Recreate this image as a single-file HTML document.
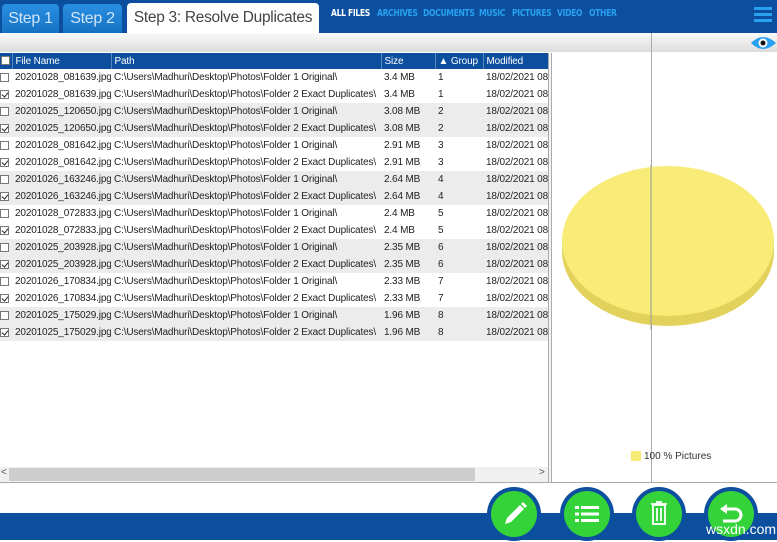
<!DOCTYPE html>
<html><head><meta charset="utf-8"><style>
*{margin:0;padding:0;box-sizing:border-box}
body{width:777px;height:540px;overflow:hidden;background:#fff;font-family:"Liberation Sans",sans-serif;position:relative}
.abs{position:absolute}
.top{left:0;top:0;width:777px;height:33px;background:#0b4f9e}
.tab{top:4px;height:29px;border-radius:4px 4px 0 0;background:linear-gradient(#2a8ee0,#1673c4);color:#cfe6fa;font-size:16px;line-height:29px;text-align:center;white-space:nowrap;letter-spacing:-0.3px}
.cat{top:8px;font-size:10px;font-weight:bold;color:#2aa0f0;font-family:"DejaVu Sans Condensed","Liberation Sans Narrow",sans-serif;letter-spacing:-0.4px;transform:scaleX(.85);transform-origin:left;white-space:nowrap}
.gbar{left:0;top:33px;width:777px;height:19px;background:linear-gradient(#fafafa,#dcdcdc)}
table{position:absolute;left:0;top:53px;border-collapse:collapse;font-size:10px;width:548px;table-layout:fixed}
td,th{height:17px;white-space:nowrap;overflow:hidden;padding-left:3px;font-weight:normal;text-align:left;color:#222;font-family:"Liberation Sans",sans-serif;letter-spacing:-0.15px}
th{background:#0b4f9e;color:#fff;height:16px;border-right:1px solid #5a86c0}
tr.g td{background:#ececec}
.cb{display:inline-block;width:9px;height:9px;border:1px solid #777;background:#fff;vertical-align:middle;position:relative}
.cb.c::after{content:"";position:absolute;left:2px;top:0;width:3px;height:5px;border:solid #222;border-width:0 1.5px 1.5px 0;transform:rotate(40deg)}
td.c0,th.c0{padding-left:0}
.btn{width:54px;height:54px;border-radius:50%;background:#0b4f9e;top:487px}
.btn div{position:absolute;left:4px;top:4px;width:46px;height:46px;border-radius:50%;background:#34d33a}
</style></head><body>
<div class="abs top"></div>
<div class="abs tab" style="left:2px;width:57px">Step 1</div>
<div class="abs tab" style="left:63px;width:59px">Step 2</div>
<div class="abs tab" style="left:127px;width:192px;top:3px;height:30px;background:#fff;color:#444;line-height:30px;font-size:15.5px">Step 3: Resolve Duplicates</div>
<div class="abs cat" style="left:331px;color:#fff">ALL FILES</div>
<div class="abs cat" style="left:377px">ARCHIVES</div>
<div class="abs cat" style="left:423px">DOCUMENTS</div>
<div class="abs cat" style="left:479px">MUSIC</div>
<div class="abs cat" style="left:512px">PICTURES</div>
<div class="abs cat" style="left:557px">VIDEO</div>
<div class="abs cat" style="left:589px">OTHER</div>
<div class="abs" style="left:754px;top:7px;width:18px;height:3px;background:#2aa0f0;box-shadow:0 6px 0 #2aa0f0,0 12px 0 #2aa0f0"></div>
<div class="abs gbar"></div>
<div class="abs" style="left:651px;top:33px;width:1px;height:450px;background:#aaa"></div>
<svg class="abs" style="left:750px;top:35px" width="27" height="16"><path d="M1 8 Q13 -4 26 8 Q13 20 1 8Z" fill="#2aa0f0"/><circle cx="13" cy="8" r="4.5" fill="#fff"/><circle cx="13" cy="8" r="2.5" fill="#111"/></svg>
<table>
<colgroup><col style="width:12px"><col style="width:99px"><col style="width:270px"><col style="width:54px"><col style="width:48px"><col style="width:65px"></colgroup>
<tr><th class="c0"><span class="cb" style="margin-left:1px"></span></th><th>File Name</th><th>Path</th><th>Size</th><th>▲ Group</th><th>Modified</th></tr>
<tr><td class="c0"><span class="cb"></span></td><td>20201028_081639.jpg</td><td>C:\Users\Madhuri\Desktop\Photos\Folder 1 Original\</td><td>3.4 MB</td><td>1</td><td>18/02/2021 08</td></tr>
<tr><td class="c0"><span class="cb c"></span></td><td>20201028_081639.jpg</td><td>C:\Users\Madhuri\Desktop\Photos\Folder 2 Exact Duplicates\</td><td>3.4 MB</td><td>1</td><td>18/02/2021 08</td></tr>
<tr class="g"><td class="c0"><span class="cb"></span></td><td>20201025_120650.jpg</td><td>C:\Users\Madhuri\Desktop\Photos\Folder 1 Original\</td><td>3.08 MB</td><td>2</td><td>18/02/2021 08</td></tr>
<tr class="g"><td class="c0"><span class="cb c"></span></td><td>20201025_120650.jpg</td><td>C:\Users\Madhuri\Desktop\Photos\Folder 2 Exact Duplicates\</td><td>3.08 MB</td><td>2</td><td>18/02/2021 08</td></tr>
<tr><td class="c0"><span class="cb"></span></td><td>20201028_081642.jpg</td><td>C:\Users\Madhuri\Desktop\Photos\Folder 1 Original\</td><td>2.91 MB</td><td>3</td><td>18/02/2021 08</td></tr>
<tr><td class="c0"><span class="cb c"></span></td><td>20201028_081642.jpg</td><td>C:\Users\Madhuri\Desktop\Photos\Folder 2 Exact Duplicates\</td><td>2.91 MB</td><td>3</td><td>18/02/2021 08</td></tr>
<tr class="g"><td class="c0"><span class="cb"></span></td><td>20201026_163246.jpg</td><td>C:\Users\Madhuri\Desktop\Photos\Folder 1 Original\</td><td>2.64 MB</td><td>4</td><td>18/02/2021 08</td></tr>
<tr class="g"><td class="c0"><span class="cb c"></span></td><td>20201026_163246.jpg</td><td>C:\Users\Madhuri\Desktop\Photos\Folder 2 Exact Duplicates\</td><td>2.64 MB</td><td>4</td><td>18/02/2021 08</td></tr>
<tr><td class="c0"><span class="cb"></span></td><td>20201028_072833.jpg</td><td>C:\Users\Madhuri\Desktop\Photos\Folder 1 Original\</td><td>2.4 MB</td><td>5</td><td>18/02/2021 08</td></tr>
<tr><td class="c0"><span class="cb c"></span></td><td>20201028_072833.jpg</td><td>C:\Users\Madhuri\Desktop\Photos\Folder 2 Exact Duplicates\</td><td>2.4 MB</td><td>5</td><td>18/02/2021 08</td></tr>
<tr class="g"><td class="c0"><span class="cb"></span></td><td>20201025_203928.jpg</td><td>C:\Users\Madhuri\Desktop\Photos\Folder 1 Original\</td><td>2.35 MB</td><td>6</td><td>18/02/2021 08</td></tr>
<tr class="g"><td class="c0"><span class="cb c"></span></td><td>20201025_203928.jpg</td><td>C:\Users\Madhuri\Desktop\Photos\Folder 2 Exact Duplicates\</td><td>2.35 MB</td><td>6</td><td>18/02/2021 08</td></tr>
<tr><td class="c0"><span class="cb"></span></td><td>20201026_170834.jpg</td><td>C:\Users\Madhuri\Desktop\Photos\Folder 1 Original\</td><td>2.33 MB</td><td>7</td><td>18/02/2021 08</td></tr>
<tr><td class="c0"><span class="cb c"></span></td><td>20201026_170834.jpg</td><td>C:\Users\Madhuri\Desktop\Photos\Folder 2 Exact Duplicates\</td><td>2.33 MB</td><td>7</td><td>18/02/2021 08</td></tr>
<tr class="g"><td class="c0"><span class="cb"></span></td><td>20201025_175029.jpg</td><td>C:\Users\Madhuri\Desktop\Photos\Folder 1 Original\</td><td>1.96 MB</td><td>8</td><td>18/02/2021 08</td></tr>
<tr class="g"><td class="c0"><span class="cb c"></span></td><td>20201025_175029.jpg</td><td>C:\Users\Madhuri\Desktop\Photos\Folder 2 Exact Duplicates\</td><td>1.96 MB</td><td>8</td><td>18/02/2021 08</td></tr>
</table>
<div class="abs" style="left:548px;top:53px;width:4px;height:430px;border-left:1px solid #aaa;border-right:1px solid #aaa;background:#f4f4f4"></div>
<div class="abs" style="left:0;top:467px;width:548px;height:15px;background:#f0f0f0"></div>
<div class="abs" style="left:9px;top:468px;width:466px;height:13px;background:#cdcdcd"></div>
<div class="abs" style="left:1px;top:467px;font-size:10px;color:#555">&lt;</div>
<div class="abs" style="left:539px;top:467px;font-size:10px;color:#555">&gt;</div>
<div class="abs" style="left:0;top:482px;width:777px;height:1px;background:#aaa"></div>
<svg class="abs" style="left:560px;top:165px" width="217" height="165">
<ellipse cx="108" cy="86" rx="106" ry="75" fill="#e2d25c"/>
<rect x="2" y="76" width="212" height="10" fill="#e2d25c"/>
<ellipse cx="108" cy="76" rx="106" ry="75" fill="#f8eb78"/>
<line x1="91" y1="0" x2="91" y2="165" stroke="#999" stroke-width="1"/>
</svg>
<div class="abs" style="left:631px;top:451px;width:10px;height:10px;background:#f8eb78"></div>
<div class="abs" style="left:644px;top:451px;font-size:10px;color:#333">100 % Pictures</div>
<div class="abs" style="left:0;top:513px;width:777px;height:27px;background:#0b4f9e"></div>
<div class="abs btn" style="left:487px"><div><svg width="46" height="46"><path d="M14 33 L16 27 L29 14 L33 18 L20 31Z M30 13 L32 11 L36 15 L34 17Z" fill="#fff"/></svg></div></div>
<div class="abs btn" style="left:560px"><div><svg width="46" height="46"><g fill="#fff"><rect x="11" y="15" width="4" height="3"/><rect x="17" y="15" width="18" height="3"/><rect x="11" y="21.5" width="4" height="3"/><rect x="17" y="21.5" width="18" height="3"/><rect x="11" y="28" width="4" height="3"/><rect x="17" y="28" width="18" height="3"/></g></svg></div></div>
<div class="abs btn" style="left:632px"><div><svg width="46" height="46"><g fill="none" stroke="#fff" stroke-width="1.8"><rect x="17" y="14" width="12" height="19"/><line x1="15" y1="13" x2="31" y2="13"/><line x1="21" y1="17" x2="21" y2="30"/><line x1="25" y1="17" x2="25" y2="30"/><line x1="20" y1="11" x2="26" y2="11"/></g></svg></div></div>
<div class="abs btn" style="left:704px"><div><svg width="46" height="46"><path d="M17 18 H27 A6 6 0 0 1 27 30 H15" fill="none" stroke="#fff" stroke-width="3"/><path d="M12 18 L19 13 L19 23Z" fill="#fff"/></svg></div></div>
<div class="abs" style="left:706px;top:521px;font-size:14px;color:#fff">wsxdn.com</div>
</body></html>
